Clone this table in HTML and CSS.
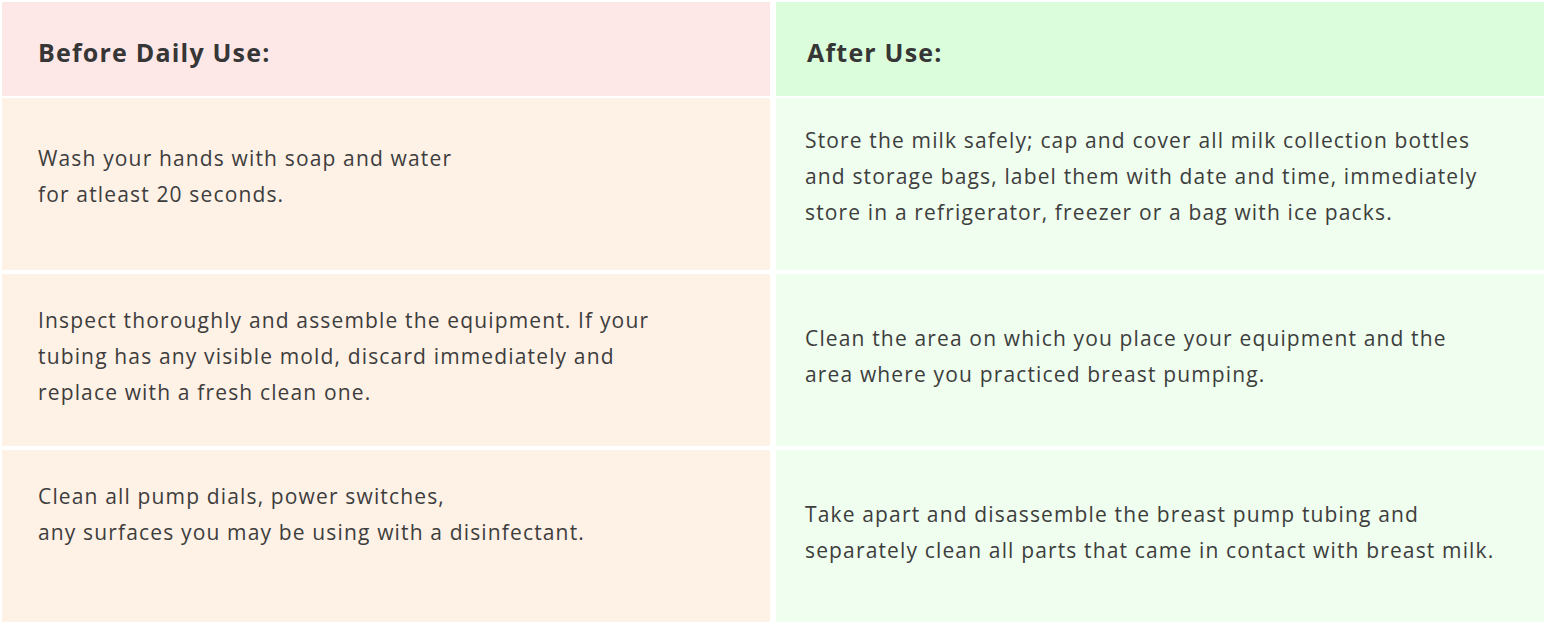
FILE: index.html
```html
<!DOCTYPE html>
<html lang="en">
<head>
<meta charset="utf-8">
<title>Breast pump hygiene</title>
<link rel="stylesheet" href="styles.css">
</head>
<body>
<div class="table">
  <div class="head">
    <div class="hcell before">Before Daily Use:</div>
    <div class="hcell after">After Use:</div>
  </div>
  <div class="body">
    <div class="cell before r1"><p>Wash your hands with soap and water<br>for atleast 20 seconds.</p></div>
    <div class="cell after r1"><p>Store the milk safely; cap and cover all milk collection bottles<br>and storage bags, label them with date and time, immediately<br>store in a refrigerator, freezer or a bag with ice packs.</p></div>
    <div class="cell before r2"><p>Inspect thoroughly and assemble the equipment. If your<br>tubing has any visible mold, discard immediately and<br>replace with a fresh clean one.</p></div>
    <div class="cell after r2"><p>Clean the area on which you place your equipment and the<br>area where you practiced breast pumping.</p></div>
    <div class="cell before r3 high"><p>Clean all pump dials, power switches,<br>any surfaces you may be using with a disinfectant.</p></div>
    <div class="cell after r3"><p>Take apart and disassemble the breast pump tubing and<br>separately clean all parts that came in contact with breast milk.</p></div>
  </div>
</div>
</body>
</html>
```

FILE: styles.css
```css
* { box-sizing: border-box; }
html, body { margin: 0; padding: 0; background: #ffffff; }
body {
  padding: 2px;
  font-family: "Open Sans", "Liberation Sans", sans-serif;
  color: #3d3d3d;
}
.table {
  display: grid;
  row-gap: 2px;
}
.head {
  display: grid;
  grid-template-columns: 768px 768px;
  column-gap: 6px;
}
.hcell {
  height: 94px;
  display: flex;
  align-items: center;
  padding-top: 6px;
  font-size: 25px;
  font-weight: 700;
  letter-spacing: 1.2px;
  color: #363636;
}
.hcell.before { background: #fde7e7; padding-left: 36px; }
.hcell.after { background: #dcfddb; padding-left: 31px; }
.body {
  display: grid;
  grid-template-columns: 768px 768px;
  column-gap: 6px;
  row-gap: 4px;
}
.cell {
  height: 172px;
  display: flex;
  align-items: center;
  font-size: 21px;
  letter-spacing: 1.15px;
  line-height: 36px;
}
.cell p { margin: 0; }
.cell.before { background: #fef1e6; padding-left: 36px; }
.cell.after { background: #effeee; padding-left: 29px; }
.cell.r1 { padding-bottom: 16px; }
.cell.r2 { padding-bottom: 8px; }
.cell.r3 { padding-bottom: 8px; }
.cell.r3.high { padding-bottom: 44px; }
```
